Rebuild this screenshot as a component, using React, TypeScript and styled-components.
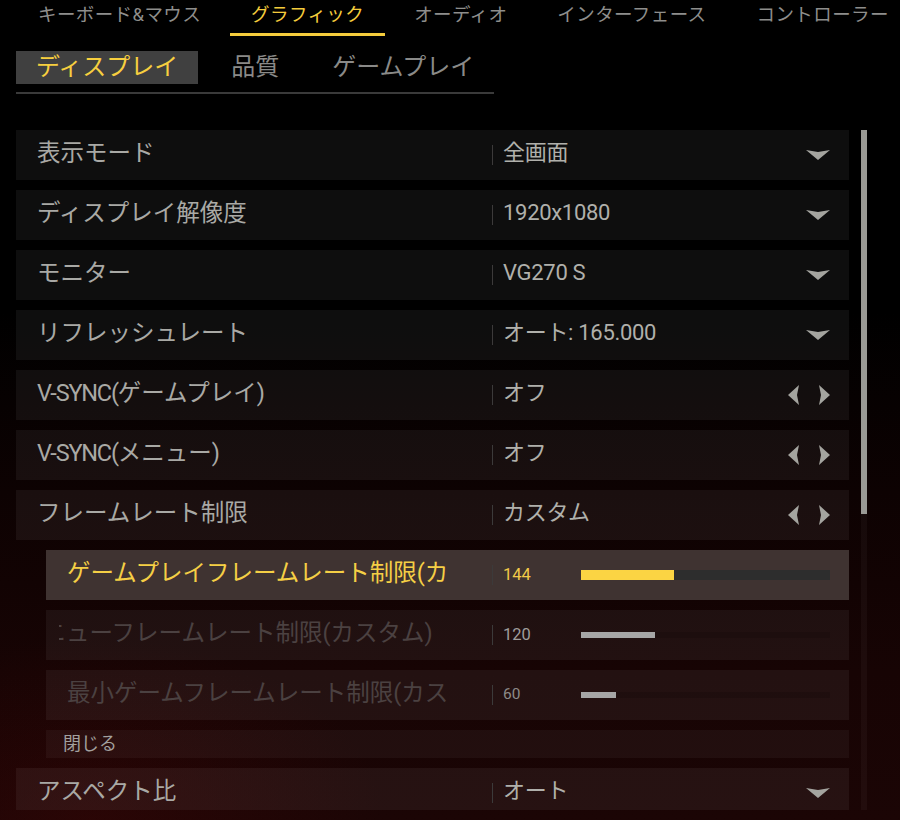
import React from "react";
import { createGlobalStyle, styled } from "styled-components";

const GlobalStyle = createGlobalStyle`
  html, body {
    margin: 0;
    padding: 0;
    background: #000;
  }
`;

const FONT = `Roboto, "Noto Sans CJK JP", "Noto Sans", sans-serif`;

const Page = styled.div`
  position: relative;
  width: 900px;
  height: 820px;
  overflow: hidden;
  font-family: ${FONT};
  background:
    radial-gradient(ellipse 420px 260px at 10% 100%, rgba(60, 6, 6, 0.45), transparent 70%),
    linear-gradient(180deg, #000 0%, #000 38%, #0d0202 60%, #170404 82%, #1b0505 100%);
`;

const TopTabs = styled.div`
  display: flex;
  flex-direction: row;
  gap: 8px;
  padding-left: 17px;
  height: 36px;
  white-space: nowrap;
`;

const TopTab = styled.div<{ $active?: boolean }>`
  flex: none;
  padding: 0 21px;
  height: 33px;
  line-height: 31px;
  font-size: 18.5px;
  letter-spacing: 0.4px;
  color: ${(p) => (p.$active ? "#f4cc3c" : "#8e8e8c")};
  border-bottom: 3px solid ${(p) => (p.$active ? "#f4cc3c" : "transparent")};
`;

const SubTabs = styled.div`
  display: flex;
  flex-direction: row;
  gap: 13px;
  margin: 15px 0 0 16px;
  width: 478px;
  padding-bottom: 8px;
  border-bottom: 2px solid #3a3a3a;
  white-space: nowrap;
`;

const SubTab = styled.div<{ $active?: boolean }>`
  flex: none;
  padding: 0 20px;
  height: 33px;
  line-height: 32px;
  font-size: 24px;
  color: ${(p) => (p.$active ? "#f7cf3f" : "#8a8a88")};
  background: ${(p) => (p.$active ? "#404040" : "transparent")};
`;

const Content = styled.div`
  display: flex;
  flex-direction: row;
  gap: 12px;
  margin-top: 36px;
  padding-left: 16px;
  height: 680px;
`;

const List = styled.div`
  display: flex;
  flex-direction: column;
  gap: 10px;
  width: 833px;
  overflow: hidden;
`;

const ScrollTrack = styled.div`
  width: 6px;
  height: 100%;
  background: rgba(255, 255, 255, 0.035);
`;

const ScrollThumb = styled.div`
  width: 6px;
  height: 384px;
  background: #9a9a95;
`;

type Tone = "normal" | "active" | "dim";

const RowBox = styled.div<{ $indent?: boolean; $tone: Tone }>`
  flex: none;
  display: flex;
  flex-direction: row;
  align-items: center;
  height: 50px;
  margin-left: ${(p) => (p.$indent ? "30px" : "0")};
  background: ${(p) => (p.$tone === "active" ? "#3f3331" : "rgba(255, 255, 255, 0.055)")};
`;

const Label = styled.div<{ $sub?: boolean; $tone: Tone }>`
  flex: 1;
  min-width: 0;
  overflow: hidden;
  white-space: nowrap;
  font-size: 23.5px;
  line-height: 1.2;
  padding-bottom: 4px;
  margin: ${(p) => (p.$sub ? "0 42px 0 13px" : "0")};
  padding-left: ${(p) => (p.$sub ? "8px" : "21px")};
  color: ${(p) =>
    p.$tone === "active" ? "#f5cf45" : p.$tone === "dim" ? "#4b4141" : "#a9a9a5"};
`;

const LabelText = styled.span`
  display: inline-block;
`;

const Latin = styled.span`
  letter-spacing: -1.2px;
`;

const Separator = styled.div`
  width: 1px;
  height: 20px;
  background: #3c3a3a;
`;

const ValueArea = styled.div`
  flex: none;
  width: 356px;
  display: flex;
  flex-direction: row;
  align-items: center;
  justify-content: space-between;
  padding: 0 19px 0 10px;
  box-sizing: border-box;
`;

const ValueText = styled.div`
  font-size: 22px;
  line-height: 1.2;
  padding-bottom: 4px;
  color: #b0b0ab;
  letter-spacing: -0.3px;
`;

const Arrows = styled.div`
  display: flex;
  flex-direction: row;
  gap: 20px;
`;

const Number = styled.div<{ $tone: Tone; $small?: boolean }>`
  width: 78px;
  padding-bottom: 2px;
  font-size: ${(p) => (p.$small ? "15.5px" : "16.5px")};
  color: ${(p) => (p.$tone === "active" ? "#f2ca48" : p.$small ? "#8d8a88" : "#9f9d9b")};
`;

const Track = styled.div<{ $tone: Tone }>`
  width: 250px;
  height: ${(p) => (p.$tone === "active" ? "10px" : "6px")};
  background: ${(p) => (p.$tone === "active" ? "#2d2d2d" : "rgba(0, 0, 0, 0.12)")};
`;

const Fill = styled.div<{ $tone: Tone }>`
  height: 100%;
  background: ${(p) => (p.$tone === "active" ? "#fbd443" : "#a6a6a6")};
`;

const CloseRow = styled.div`
  flex: none;
  height: 28px;
  margin-left: 30px;
  padding-left: 17px;
  display: flex;
  align-items: center;
  font-size: 18px;
  line-height: 1.2;
  color: #a2a09e;
  background: rgba(255, 255, 255, 0.045);
`;

const DropArrow = () => (
  <svg width="24" height="10" viewBox="0 0 24 10">
    <polygon points="0,0 12,2 24,0 12,10" fill="#a4a49f" />
  </svg>
);

const LeftArrow = () => (
  <svg width="11" height="20" viewBox="0 0 11 20">
    <polygon points="11,0 0,10 11,20 9,10" fill="#a4a49f" />
  </svg>
);

const RightArrow = () => (
  <svg width="11" height="20" viewBox="0 0 11 20">
    <polygon points="0,0 11,10 0,20 2,10" fill="#a4a49f" />
  </svg>
);

interface Setting {
  label: React.ReactNode;
  value: string;
  kind: "drop" | "cycle";
}

const settings: Setting[] = [
  { label: "表示モード", value: "全画面", kind: "drop" },
  { label: "ディスプレイ解像度", value: "1920x1080", kind: "drop" },
  { label: "モニター", value: "VG270 S", kind: "drop" },
  { label: "リフレッシュレート", value: "オート: 165.000", kind: "drop" },
  {
    label: (
      <>
        <Latin>V-SYNC(</Latin>ゲームプレイ<Latin>)</Latin>
      </>
    ),
    value: "オフ",
    kind: "cycle",
  },
  {
    label: (
      <>
        <Latin>V-SYNC(</Latin>メニュー<Latin>)</Latin>
      </>
    ),
    value: "オフ",
    kind: "cycle",
  },
  { label: "フレームレート制限", value: "カスタム", kind: "cycle" },
];

interface Limit {
  label: string;
  value: number;
  fill: number;
  tone: Tone;
  shift?: number;
}

const limits: Limit[] = [
  { label: "ゲームプレイフレームレート制限(カスタム)", value: 144, fill: 93, tone: "active" },
  { label: "メニューフレームレート制限(カスタム)", value: 120, fill: 74, tone: "dim", shift: -48 },
  { label: "最小ゲームフレームレート制限(カスタム)", value: 60, fill: 35, tone: "dim" },
];

const SettingRow: React.FC<{ setting: Setting }> = ({ setting }) => (
  <RowBox $tone="normal">
    <Label $tone="normal">{setting.label}</Label>
    <Separator />
    <ValueArea>
      <ValueText>{setting.value}</ValueText>
      {setting.kind === "drop" ? (
        <DropArrow />
      ) : (
        <Arrows>
          <LeftArrow />
          <RightArrow />
        </Arrows>
      )}
    </ValueArea>
  </RowBox>
);

const LimitRow: React.FC<{ limit: Limit }> = ({ limit }) => (
  <RowBox $indent $tone={limit.tone}>
    <Label $sub $tone={limit.tone}>
      <LabelText style={limit.shift ? { transform: `translateX(${limit.shift}px)` } : undefined}>
        {limit.label}
      </LabelText>
    </Label>
    <Separator />
    <ValueArea>
      <Number $tone={limit.tone} $small={limit.value < 100}>
        {limit.value}
      </Number>
      <Track $tone={limit.tone}>
        <Fill $tone={limit.tone} style={{ width: limit.fill }} />
      </Track>
    </ValueArea>
  </RowBox>
);

export default function App() {
  return (
    <Page>
      <GlobalStyle />
      <TopTabs>
        <TopTab>キーボード&amp;マウス</TopTab>
        <TopTab $active>グラフィック</TopTab>
        <TopTab>オーディオ</TopTab>
        <TopTab>インターフェース</TopTab>
        <TopTab>コントローラー</TopTab>
      </TopTabs>

      <SubTabs>
        <SubTab $active>ディスプレイ</SubTab>
        <SubTab>品質</SubTab>
        <SubTab>ゲームプレイ</SubTab>
      </SubTabs>

      <Content>
        <List>
          {settings.map((s, i) => (
            <SettingRow key={i} setting={s} />
          ))}
          {limits.map((l, i) => (
            <LimitRow key={i} limit={l} />
          ))}
          <CloseRow>閉じる</CloseRow>
          <SettingRow setting={{ label: "アスペクト比", value: "オート", kind: "drop" }} />
        </List>
        <ScrollTrack>
          <ScrollThumb />
        </ScrollTrack>
      </Content>
    </Page>
  );
}
